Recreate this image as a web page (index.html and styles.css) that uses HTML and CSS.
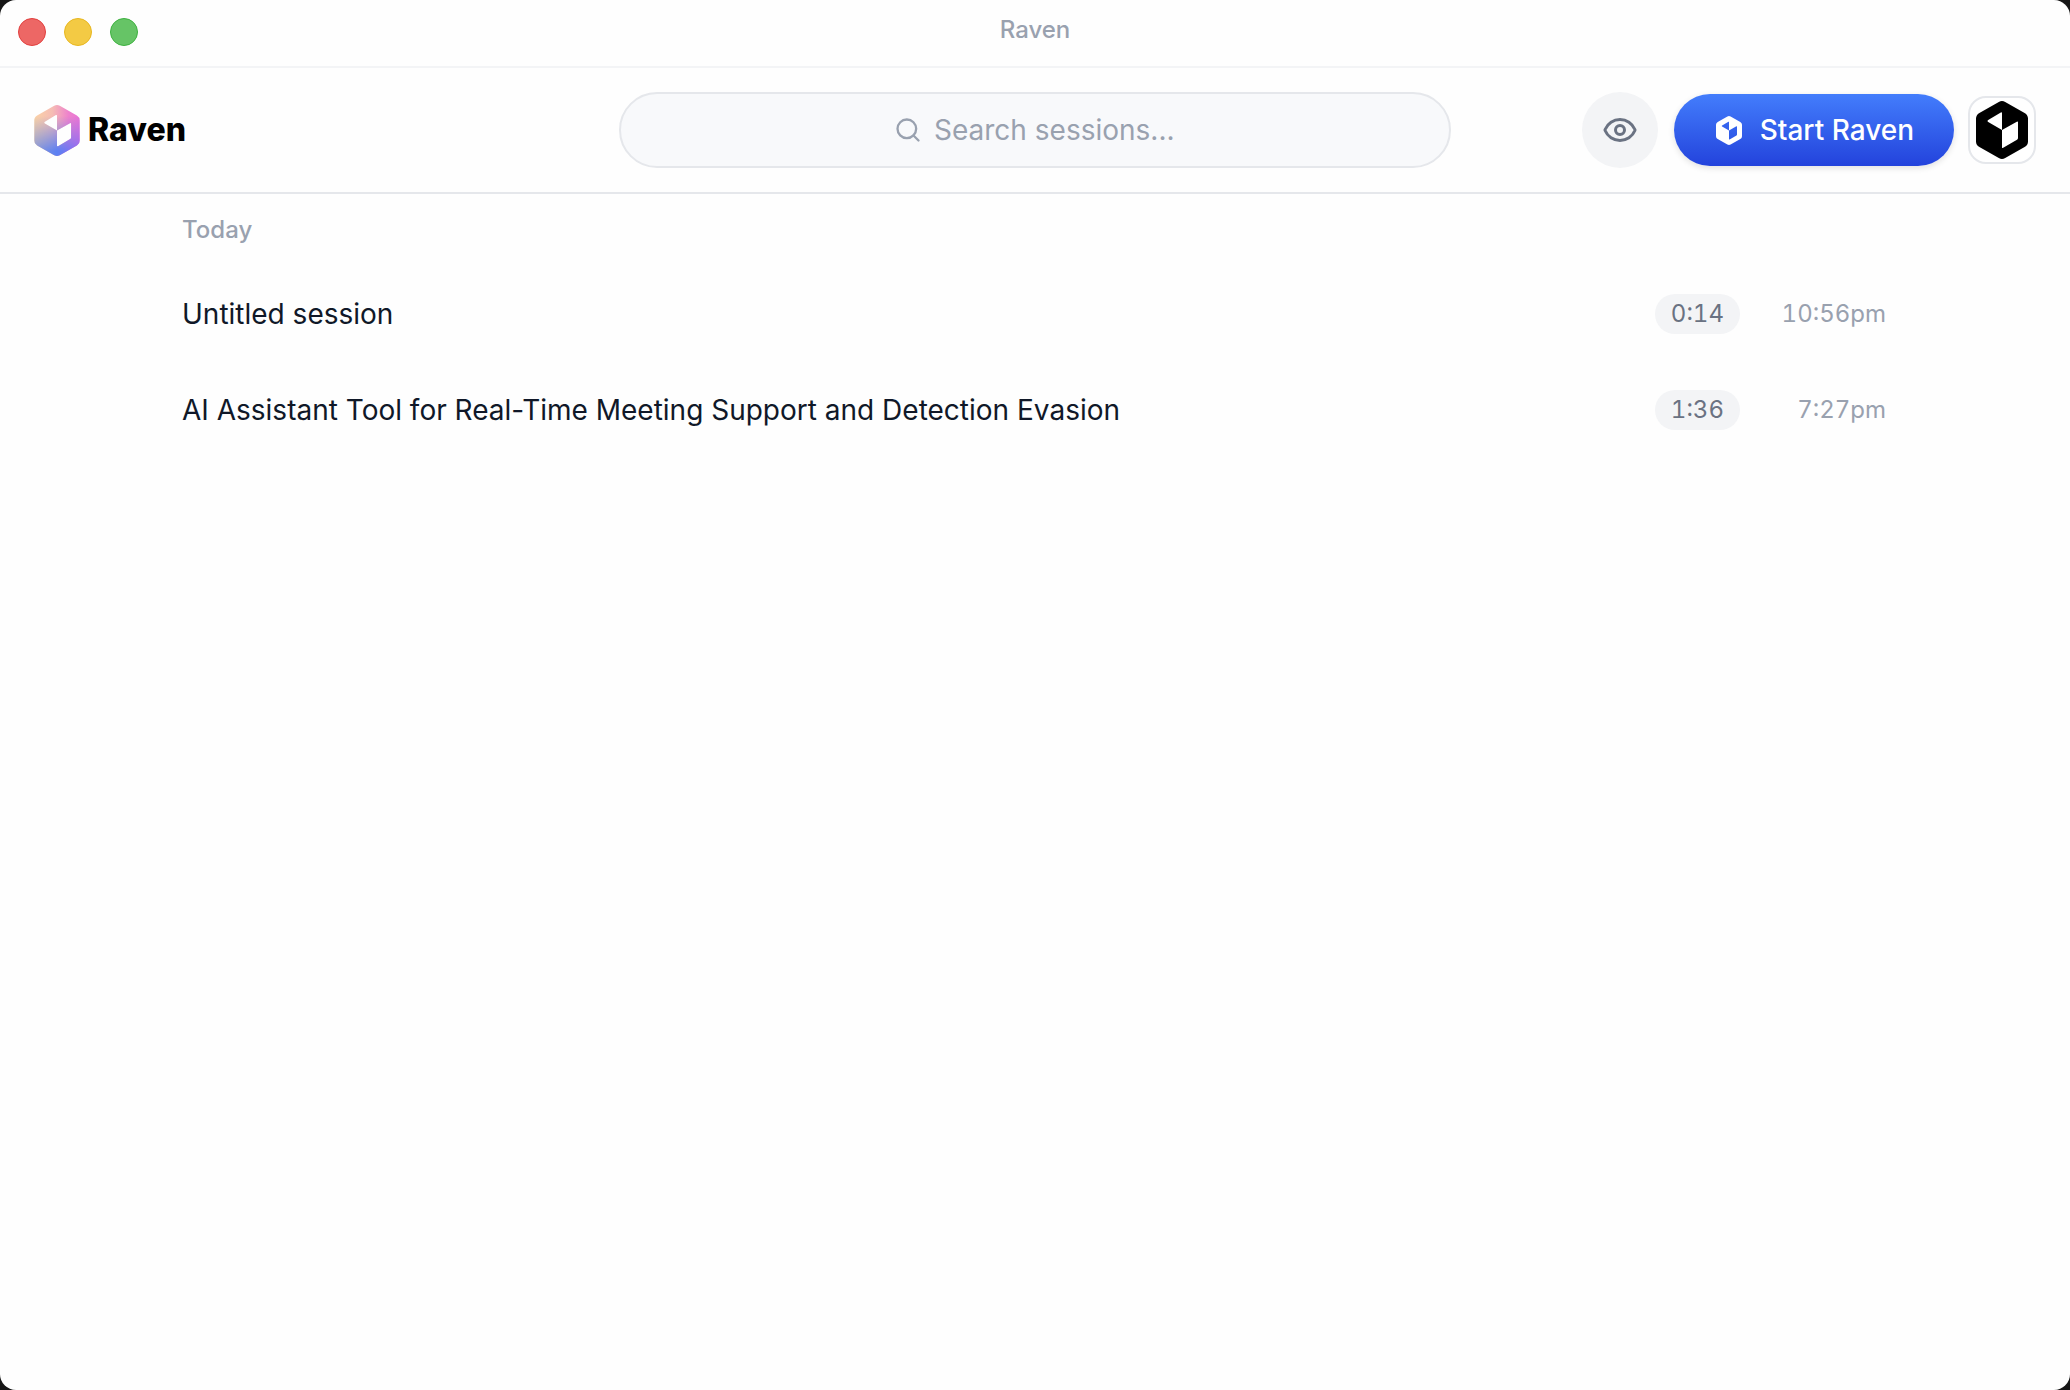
FILE: index.html
```html
<!DOCTYPE html>
<html lang="en">
<head>
    <meta charset="UTF-8">
    <meta name="viewport" content="width=device-width, initial-scale=1.0">
    <title>Raven</title>
    <link rel="stylesheet" href="styles.css">
</head>
<body>
    <!-- Shared logo mark -->
    <svg class="sprite" aria-hidden="true">
        <symbol id="mark" viewBox="0 0 52 58">
            <path fill-rule="evenodd" d="M22.8 .9Q26 -.9 29.2 .9L48.6 11.9Q52 13.9 52 17.6V40.4Q52 44.1 48.6 46.1L29.2 57.1Q26 58.9 22.8 57.1L3.4 46.1Q0 44.1 0 40.4V17.6Q0 13.9 3.4 11.9ZM26 12.2Q26 10.8 24.8 11.5L12.2 19Q10.8 20 12.2 20.9L26 29V46.2Q26 47.5 27.2 46.8L41 38.8Q42 38.2 42 37V21.4Q42 20 40.8 20.7L26 29Z"/>
        </symbol>
    </svg>

    <div class="window">
        <div class="titlebar">
            <div class="lights">
                <button type="button" class="light light-close" aria-label="Close"></button>
                <button type="button" class="light light-minimize" aria-label="Minimize"></button>
                <button type="button" class="light light-zoom" aria-label="Zoom"></button>
            </div>
            <div class="titlebar-text">Raven</div>
        </div>

        <header class="header">
            <a class="brand" href="#">
                <svg class="brand-mark" viewBox="0 0 52 58" aria-hidden="true">
                    <defs>
                        <linearGradient id="warm" x1="0" y1="0" x2="1" y2="0">
                            <stop offset="0" stop-color="#fbd3a6"/>
                            <stop offset=".4" stop-color="#f5bcb4"/>
                            <stop offset=".75" stop-color="#ee82cc"/>
                            <stop offset="1" stop-color="#e874d6"/>
                        </linearGradient>
                        <linearGradient id="cool" x1="0" y1="0" x2="1" y2="0">
                            <stop offset="0" stop-color="#8798d8"/>
                            <stop offset=".5" stop-color="#5c80f2"/>
                            <stop offset="1" stop-color="#8f6cf2"/>
                        </linearGradient>
                        <linearGradient id="fade" x1="0" y1="0" x2="0" y2="1">
                            <stop offset=".22" stop-color="#000"/>
                            <stop offset=".9" stop-color="#fff"/>
                        </linearGradient>
                        <mask id="lower">
                            <rect width="52" height="58" fill="url(#fade)"/>
                        </mask>
                    </defs>
                    <use href="#mark" width="52" height="58" fill="url(#warm)"/>
                    <g mask="url(#lower)">
                        <use href="#mark" width="52" height="58" fill="url(#cool)"/>
                    </g>
                </svg>
                <span class="brand-name">Raven</span>
            </a>

            <label class="search">
                <svg class="search-icon" viewBox="0 0 24 24" aria-hidden="true">
                    <circle cx="11" cy="11" r="8"/>
                    <path d="m21 21-4.3-4.3"/>
                </svg>
                <input class="search-input" type="text" placeholder="Search sessions..." aria-label="Search sessions">
            </label>

            <div class="actions">
                <button type="button" class="eye-button" aria-label="Toggle visibility">
                    <svg class="eye-icon" viewBox="0 0 24 24" aria-hidden="true">
                        <path d="M2.062 12.348a1 1 0 0 1 0-.696 10.75 10.75 0 0 1 19.876 0 1 1 0 0 1 0 .696 10.75 10.75 0 0 1-19.876 0"/>
                        <circle cx="12" cy="12" r="3"/>
                    </svg>
                </button>
                <button type="button" class="start-button">
                    <svg class="start-icon" aria-hidden="true"><use href="#mark"/></svg>
                    Start Raven
                </button>
                <button type="button" class="avatar" aria-label="Account">
                    <svg class="avatar-icon" aria-hidden="true"><use href="#mark"/></svg>
                </button>
            </div>
        </header>

        <main class="sessions">
            <h2 class="day">Today</h2>
            <ul class="session-list">
                <li class="session">
                    <a class="session-title" href="#">Untitled session</a>
                    <span class="duration">0:14</span>
                    <time class="time">10:56pm</time>
                </li>
                <li class="session">
                    <a class="session-title" href="#">AI Assistant Tool for Real-Time Meeting Support and Detection Evasion</a>
                    <span class="duration">1:36</span>
                    <time class="time">7:27pm</time>
                </li>
            </ul>
        </main>
    </div>
</body>
</html>
```
FILE: styles.css
```css
* {
    box-sizing: border-box;
}

body {
    margin: 0;
    background-color: #161616;
    font-family: Inter, "Liberation Sans", sans-serif;
    color: #101828;
}

button,
input {
    font: inherit;
    border: none;
    padding: 0;
}

button {
    cursor: pointer;
}

a {
    color: inherit;
    text-decoration: none;
}

.sprite {
    position: absolute;
    width: 0;
    height: 0;
}

.window {
    min-height: 100vh;
    background-color: #fefefe;
    border-radius: 16px;
    overflow: hidden;
}

/* Title bar */
.titlebar {
    display: grid;
    grid-template-columns: 1fr auto 1fr;
    align-items: start;
    height: 68px;
    padding: 18px 18px 0;
    border-bottom: 2px solid #f3f4f6;
}

.lights {
    display: flex;
    gap: 18px;
}

.light {
    width: 28px;
    height: 28px;
    border-radius: 50%;
    border: 1px solid;
}

.light-close {
    background-color: #ed6765;
    border-color: #e2403f;
}

.light-minimize {
    background-color: #f3ca44;
    border-color: #e8b720;
}

.light-zoom {
    background-color: #66c466;
    border-color: #3eb240;
}

.titlebar-text {
    font-size: 24px;
    line-height: 24px;
    font-weight: 500;
    color: #99a1af;
}

/* Header */
.header {
    display: grid;
    grid-template-columns: 1fr minmax(0, 832px) 1fr;
    align-items: center;
    gap: 24px;
    padding: 24px 34px;
    border-bottom: 2px solid #e5e7eb;
}

.brand {
    display: flex;
    align-items: center;
    gap: 8px;
}

.brand-mark {
    width: 46px;
    height: 51px;
}

.brand-name {
    font-size: 32px;
    line-height: 40px;
    font-weight: 800;
    color: #000;
}

.search {
    display: flex;
    align-items: center;
    justify-content: center;
    gap: 12px;
    height: 76px;
    background-color: #f8f9fb;
    border: 2px solid #e5e7eb;
    border-radius: 38px;
}

.search-icon,
.eye-icon {
    fill: none;
    stroke: currentColor;
    stroke-width: 2;
    stroke-linecap: round;
    stroke-linejoin: round;
}

.search-icon {
    width: 28px;
    height: 28px;
    color: #99a1af;
}

.search-input {
    width: 242px;
    font-size: 28px;
    line-height: 40px;
    color: #101828;
    background: none;
    outline: none;
}

.search-input::placeholder {
    color: #99a1af;
    opacity: 1;
}

.actions {
    display: flex;
    align-items: center;
    justify-content: flex-end;
    gap: 14px;
}

.eye-button {
    display: flex;
    align-items: center;
    justify-content: center;
    width: 76px;
    height: 76px;
    margin-right: 2px;
    border-radius: 50%;
    background-color: #f3f4f6;
    color: #6a7282;
}

.eye-icon {
    width: 36px;
    height: 36px;
}

.start-button {
    display: flex;
    align-items: center;
    gap: 18px;
    height: 72px;
    padding: 0 40px 0 42px;
    border-radius: 36px;
    background: linear-gradient(#437dfc, #2343dc);
    box-shadow: 0 2px 6px rgba(0, 0, 0, 0.12);
    font-size: 28px;
    font-weight: 500;
    color: #fff;
    white-space: nowrap;
}

.start-icon {
    width: 26px;
    height: 29px;
    fill: currentColor;
}

.avatar {
    display: flex;
    align-items: center;
    justify-content: center;
    width: 68px;
    height: 68px;
    border: 2px solid #e5e7eb;
    border-radius: 18px;
    background-color: #fff;
    color: #000;
}

.avatar-icon {
    flex-shrink: 0;
    width: 52px;
    height: 58px;
    fill: currentColor;
}

/* Sessions */
.sessions {
    max-width: 1754px;
    margin: 0 auto;
    padding: 20px 26px 20px 24px;
}

.day {
    margin: 0 0 20px;
    font-size: 24px;
    line-height: 32px;
    font-weight: 500;
    color: #99a1af;
}

.session-list {
    list-style: none;
    margin: 0;
    padding: 0;
}

.session {
    display: flex;
    align-items: center;
    gap: 16px;
    height: 96px;
}

.session-title {
    flex: 1;
    min-width: 0;
    font-size: 28px;
    line-height: 40px;
}

.duration {
    padding: 4px 16px;
    border-radius: 20px;
    background-color: #f3f4f6;
    font-size: 24px;
    line-height: 32px;
    font-variant-numeric: tabular-nums;
    color: #6a7282;
}

.time {
    width: 130px;
    font-size: 24px;
    line-height: 32px;
    font-variant-numeric: tabular-nums;
    text-align: right;
    color: #99a1af;
}
```
